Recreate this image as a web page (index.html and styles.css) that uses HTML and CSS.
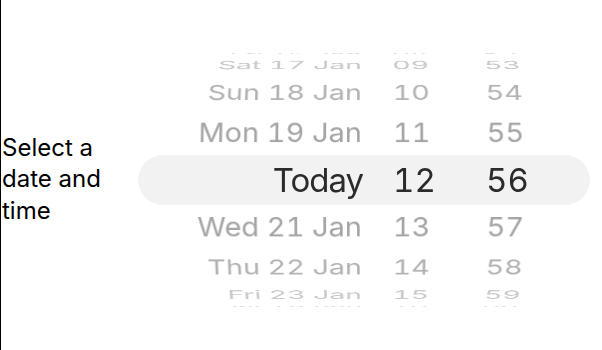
FILE: index.html
```html
<!DOCTYPE html>
<html lang="en">
<head>
    <meta charset="UTF-8">
    <meta name="viewport" content="width=device-width, initial-scale=1.0">
    <title>Date Picker</title>
    <link rel="stylesheet" href="styles.css">
</head>
<body>
    <div class="screen">
        <p class="label">Select a date and time</p>
        <div class="picker">
            <div class="wheel">
                <div class="selection"></div>
                <div class="row up4"><span class="day">Fri 16 Jan</span><span class="hour">08</span><span class="min">52</span></div>
                <div class="row up3"><span class="day">Sat 17 Jan</span><span class="hour">09</span><span class="min">53</span></div>
                <div class="row up2"><span class="day">Sun 18 Jan</span><span class="hour">10</span><span class="min">54</span></div>
                <div class="row up1"><span class="day">Mon 19 Jan</span><span class="hour">11</span><span class="min">55</span></div>
                <div class="row current"><span class="day">Today</span><span class="hour">12</span><span class="min">56</span></div>
                <div class="row down1"><span class="day">Wed 21 Jan</span><span class="hour">13</span><span class="min">57</span></div>
                <div class="row down2"><span class="day">Thu 22 Jan</span><span class="hour">14</span><span class="min">58</span></div>
                <div class="row down3"><span class="day">Fri 23 Jan</span><span class="hour">15</span><span class="min">59</span></div>
                <div class="row down4"><span class="day">Sat 24 Jan</span><span class="hour">16</span><span class="min">00</span></div>
            </div>
        </div>
    </div>
</body>
</html>
```

FILE: styles.css
```css
body {
    margin: 0;
    background: #fff;
    font-family: Inter, 'Noto Sans', sans-serif;
}
.screen {
    display: flex;
    align-items: center;
    height: 350px;
    border-left: 1px solid #000;
    box-sizing: border-box;
}
.label {
    flex: 0 0 112px;
    margin: 8px 0 0 1px;
    font-size: 24px;
    line-height: 31.5px;
    color: #000;
}
.picker {
    margin-left: 24px;
    margin-top: 10px;
    width: 452px;
    height: 265px;
    overflow: hidden;
}
.wheel {
    display: grid;
    place-items: center;
    height: 100%;
}
.selection,
.row {
    grid-area: 1 / 1;
}
.selection {
    width: 452px;
    height: 50px;
    border-radius: 25px;
    background: #f2f2f2;
}
.row {
    display: flex;
    width: 452px;
    height: 40px;
    line-height: 40px;
    font-size: 29px;
    font-variant-numeric: tabular-nums;
    color: #a4a4a4;
    white-space: nowrap;
    backface-visibility: hidden;
}
.day {
    width: 224px;
    text-align: right;
}
.hour {
    width: 94px;
    padding-left: 31px;
}
.current {
    font-size: 33px;
    color: #2b2b2b;
}
.current .day {
    width: 225px;
    letter-spacing: -1px;
}
.current .hour {
    width: 93px;
    padding-left: 30px;
}
.up1 { transform: perspective(3000px) translateZ(-132px) rotateX(21deg) translateZ(132px); }
.up2 { transform: perspective(3000px) translateZ(-132px) rotateX(42deg) translateZ(132px); color: #b2b2b2; }
.up3 { transform: perspective(3000px) translateZ(-132px) rotateX(63deg) translateZ(132px); color: #c9c9c9; }
.up4 { transform: perspective(3000px) translateZ(-132px) rotateX(84deg) translateZ(132px); color: #dcdcdc; }
.down1 { transform: perspective(3000px) translateZ(-132px) rotateX(-21deg) translateZ(132px); }
.down2 { transform: perspective(3000px) translateZ(-132px) rotateX(-42deg) translateZ(132px); color: #b2b2b2; }
.down3 { transform: perspective(3000px) translateZ(-132px) rotateX(-63deg) translateZ(132px); color: #c9c9c9; }
.down4 { transform: perspective(3000px) translateZ(-132px) rotateX(-84deg) translateZ(132px); color: #dcdcdc; }
```
